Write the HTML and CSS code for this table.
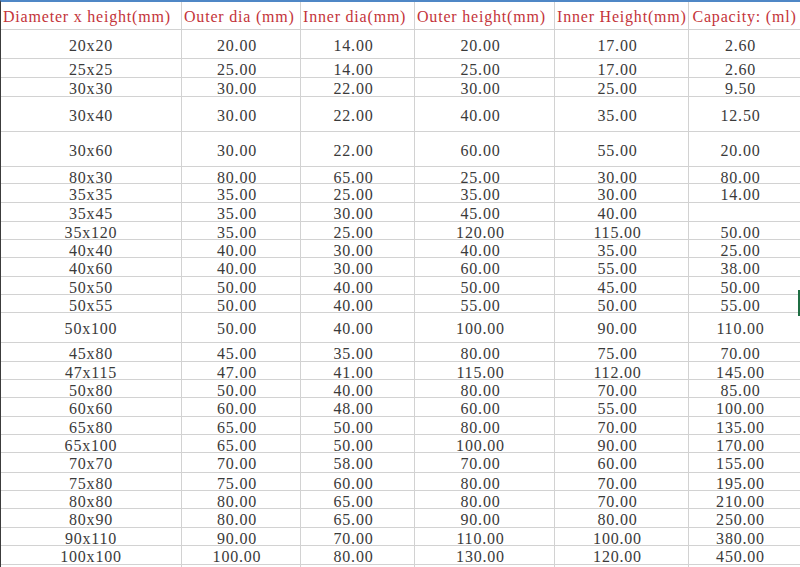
FILE: index.html
```html
<!DOCTYPE html>
<html>
<head>
<meta charset="utf-8">
<link rel="stylesheet" href="styles.css">
</head>
<body>
<div class="sheet">
  <div class="row head h28">
    <div class="c">Diameter x height(mm)</div>
    <div class="c">Outer dia (mm)</div>
    <div class="c">Inner dia(mm)</div>
    <div class="c">Outer height(mm)</div>
    <div class="c">Inner Height(mm)</div>
    <div class="c clip"><span>Capacity: (ml)</span></div>
  </div>
  <div class="row h29"><div class="c">20x20</div><div class="c n">20.00</div><div class="c n">14.00</div><div class="c n">20.00</div><div class="c n">17.00</div><div class="c n">2.60</div></div>
  <div class="row h19"><div class="c">25x25</div><div class="c n">25.00</div><div class="c n">14.00</div><div class="c n">25.00</div><div class="c n">17.00</div><div class="c n">2.60</div></div>
  <div class="row h19"><div class="c">30x30</div><div class="c n">30.00</div><div class="c n">22.00</div><div class="c n">30.00</div><div class="c n">25.00</div><div class="c n">9.50</div></div>
  <div class="row h35"><div class="c">30x40</div><div class="c n">30.00</div><div class="c n">22.00</div><div class="c n">40.00</div><div class="c n">35.00</div><div class="c n">12.50</div></div>
  <div class="row h35"><div class="c">30x60</div><div class="c n">30.00</div><div class="c n">22.00</div><div class="c n">60.00</div><div class="c n">55.00</div><div class="c n">20.00</div></div>
  <div class="row h17"><div class="c">80x30</div><div class="c n">80.00</div><div class="c n">65.00</div><div class="c n">25.00</div><div class="c n">30.00</div><div class="c n">80.00</div></div>
  <div class="row h19"><div class="c">35x35</div><div class="c n">35.00</div><div class="c n">25.00</div><div class="c n">35.00</div><div class="c n">30.00</div><div class="c n">14.00</div></div>
  <div class="row h19"><div class="c">35x45</div><div class="c n">35.00</div><div class="c n">30.00</div><div class="c n">45.00</div><div class="c n">40.00</div><div class="c n"></div></div>
  <div class="row h18"><div class="c">35x120</div><div class="c n">35.00</div><div class="c n">25.00</div><div class="c n">120.00</div><div class="c n">115.00</div><div class="c n">50.00</div></div>
  <div class="row h18"><div class="c">40x40</div><div class="c n">40.00</div><div class="c n">30.00</div><div class="c n">40.00</div><div class="c n">35.00</div><div class="c n">25.00</div></div>
  <div class="row h19"><div class="c">40x60</div><div class="c n">40.00</div><div class="c n">30.00</div><div class="c n">60.00</div><div class="c n">55.00</div><div class="c n">38.00</div></div>
  <div class="row h18"><div class="c">50x50</div><div class="c n">50.00</div><div class="c n">40.00</div><div class="c n">50.00</div><div class="c n">45.00</div><div class="c n">50.00</div></div>
  <div class="row h18"><div class="c">50x55</div><div class="c n">50.00</div><div class="c n">40.00</div><div class="c n">55.00</div><div class="c n">50.00</div><div class="c n">55.00</div></div>
  <div class="row h30"><div class="c">50x100</div><div class="c n">50.00</div><div class="c n">40.00</div><div class="c n">100.00</div><div class="c n">90.00</div><div class="c n">110.00</div></div>
  <div class="row h19"><div class="c">45x80</div><div class="c n">45.00</div><div class="c n">35.00</div><div class="c n">80.00</div><div class="c n">75.00</div><div class="c n">70.00</div></div>
  <div class="row h18"><div class="c">47x115</div><div class="c n">47.00</div><div class="c n">41.00</div><div class="c n">115.00</div><div class="c n">112.00</div><div class="c n">145.00</div></div>
  <div class="row h18"><div class="c">50x80</div><div class="c n">50.00</div><div class="c n">40.00</div><div class="c n">80.00</div><div class="c n">70.00</div><div class="c n">85.00</div></div>
  <div class="row h19"><div class="c">60x60</div><div class="c n">60.00</div><div class="c n">48.00</div><div class="c n">60.00</div><div class="c n">55.00</div><div class="c n">100.00</div></div>
  <div class="row h18"><div class="c">65x80</div><div class="c n">65.00</div><div class="c n">50.00</div><div class="c n">80.00</div><div class="c n">70.00</div><div class="c n">135.00</div></div>
  <div class="row h18"><div class="c">65x100</div><div class="c n">65.00</div><div class="c n">50.00</div><div class="c n">100.00</div><div class="c n">90.00</div><div class="c n">170.00</div></div>
  <div class="row h20"><div class="c">70x70</div><div class="c n">70.00</div><div class="c n">58.00</div><div class="c n">70.00</div><div class="c n">60.00</div><div class="c n">155.00</div></div>
  <div class="row h18"><div class="c">75x80</div><div class="c n">75.00</div><div class="c n">60.00</div><div class="c n">80.00</div><div class="c n">70.00</div><div class="c n">195.00</div></div>
  <div class="row h18"><div class="c">80x80</div><div class="c n">80.00</div><div class="c n">65.00</div><div class="c n">80.00</div><div class="c n">70.00</div><div class="c n">210.00</div></div>
  <div class="row h19"><div class="c">80x90</div><div class="c n">80.00</div><div class="c n">65.00</div><div class="c n">90.00</div><div class="c n">80.00</div><div class="c n">250.00</div></div>
  <div class="row h18"><div class="c">90x110</div><div class="c n">90.00</div><div class="c n">70.00</div><div class="c n">110.00</div><div class="c n">100.00</div><div class="c n">380.00</div></div>
  <div class="row h19"><div class="c">100x100</div><div class="c n">100.00</div><div class="c n">80.00</div><div class="c n">130.00</div><div class="c n">120.00</div><div class="c n">450.00</div></div>
  <div class="row h18"><div class="c"></div><div class="c n"></div><div class="c n"></div><div class="c n"></div><div class="c n"></div><div class="c n"></div></div>
  <div class="sel"></div>
</div>
</body>
</html>
```

FILE: styles.css
```css
html, body {
  margin: 0;
  padding: 0;
  background: #ffffff;
  overflow: hidden;
}

.sheet {
  position: relative;
  width: 800px;
  height: 567px;
  box-sizing: border-box;
  border-top: 2px solid #4f87c6;
  border-left: 1px solid #3c3c3c;
  overflow: hidden;
  font-family: "Liberation Serif", "DejaVu Serif", serif;
  font-size: 16px;
  letter-spacing: 0.8px;
  color: #3a3a3a;
}

.row {
  display: grid;
  grid-template-columns: 181px 119px 114px 140px 134px 111px;
  box-sizing: border-box;
  border-bottom: 1px solid #d2d2d2;
}

.h17 { height: 17px; }
.h18 { height: 18px; }
.h19 { height: 19px; }
.h20 { height: 20px; }
.h28 { height: 28px; }
.h29 { height: 29px; }
.h30 { height: 30px; }
.h35 { height: 35px; }

.c {
  display: flex;
  align-items: center;
  justify-content: center;
  box-sizing: border-box;
  border-right: 1px solid #d2d2d2;
  padding-top: 3px;
  white-space: nowrap;
  line-height: 16px;
}

.c:last-child {
  border-right: none;
}

.n {
  padding-right: 8px;
}

.head .c {
  justify-content: flex-start;
  padding-left: 2px;
  padding-top: 2px;
  color: #c4343a;
}

.head .c.clip {
  justify-content: center;
  padding-left: 0;
  overflow: hidden;
}

.sel {
  position: absolute;
  right: 0;
  top: 288px;
  width: 2px;
  height: 26px;
  background: #1f6e43;
}
```
